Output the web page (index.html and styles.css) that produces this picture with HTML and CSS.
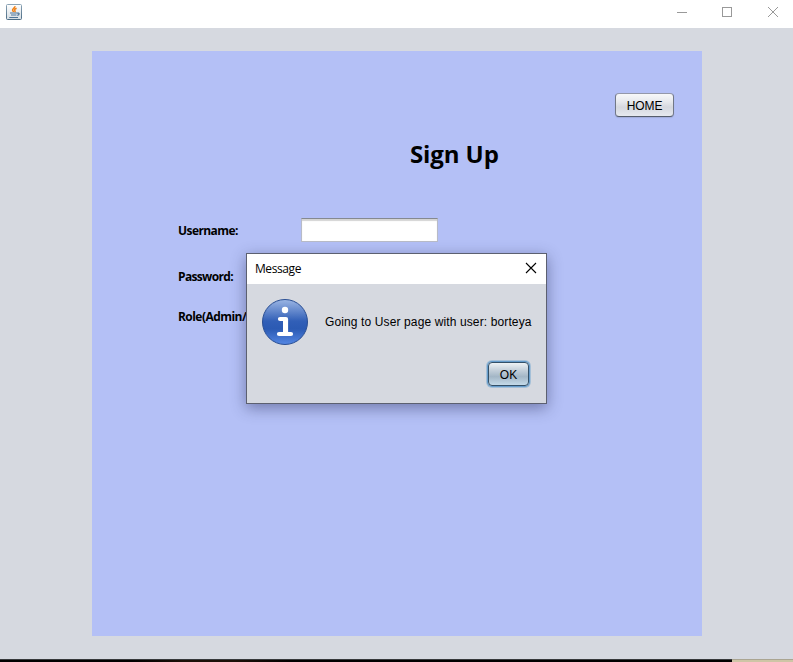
FILE: index.html
```
<!DOCTYPE html>
<html lang="en">
<head>
<meta charset="utf-8">
<title>Sign Up</title>
<link rel="stylesheet" href="styles.css">
</head>
<body>
<div class="window">
  <header class="titlebar">
    <svg class="java" width="16" height="16" viewBox="0 0 16 16" fill="none">
      <defs><linearGradient id="frame" x2="0" y2="1"><stop stop-color="#8aa3b5"/><stop offset="1" stop-color="#4c6c85"/></linearGradient>
      <linearGradient id="tile" x2="0" y2="1"><stop stop-color="#fff"/><stop offset="1" stop-color="#d5dde3"/></linearGradient></defs>
      <rect x=".5" y=".5" width="15" height="15" rx="1" fill="url(#tile)" stroke="url(#frame)"/>
      <path d="M9 2.200C9.200 4 6 4.700 6.600 6.200c.2.700.8 1.100.9 1.800M10.600 4.300C8.300 5.300 8.300 6 9 6.800c.4.600 0 1-.4 1.300" stroke="#f08218" stroke-width="1.500"/>
      <path d="M4 9h7M5 11h5.500M3.300 13.500h8.700M11 9.200c2.800-.8 2.800 1.600.3 2.100" stroke="#4f7497" stroke-width="1.200"/>
    </svg>
    <svg class="controls" width="102" height="12" viewBox="0 0 102 12" fill="none" stroke="#999">
      <path d="M0 6.500h10"/><rect x="45.500" y="1.500" width="9" height="9"/><path d="M91 1l10 10M101 1L91 11"/>
    </svg>
  </header>
  <main class="content">
    <section class="panel">
      <div class="top"><button class="btn home">HOME</button></div>
      <h1>Sign Up</h1>
      <form class="form">
        <label class="username">Username:</label><input type="text">
        <label class="password">Password:</label>
        <label class="role">Role(Admin/</label>
      </form>
    </section>
  </main>
  <footer class="edge"><div class="dark"></div><div class="light"></div></footer>
  <div class="dialog" role="dialog">
    <div class="dialog-title"><span>Message</span>
      <svg width="12" height="12" viewBox="0 0 12 12" stroke="#000" stroke-width="1.100"><path d="M1 1l10 10M11 1L1 11"/></svg>
    </div>
    <div class="message">
      <svg width="46" height="46" viewBox="0 0 46 46">
        <defs><linearGradient id="info" x2="0" y2="1"><stop stop-color="#9cb6e4"/><stop offset=".48" stop-color="#315fb7"/><stop offset=".65" stop-color="#2b5ab3"/><stop offset="1" stop-color="#5487e4"/></linearGradient></defs>
        <circle cx="23" cy="23" r="22.500" fill="url(#info)" stroke="#294e93"/>
        <circle cx="23" cy="11" r="3.200" fill="#fff"/>
        <path d="M18 20h6V35M17 35h12" fill="none" stroke="#fff" stroke-width="4.200" stroke-linecap="round" stroke-linejoin="round"/>
        <path d="M23.500 20v15" stroke="#fff" stroke-width="5"/>
      </svg>
      <span>Going to User page with user: borteya</span>
    </div>
    <div class="actions"><button class="btn ok">OK</button></div>
  </div>
</div>
</body>
</html>
```
FILE: styles.css
```
* { box-sizing: border-box; }
body { margin: 0; }
.window { position: relative; width: 793px; height: 662px; display: flex; flex-direction: column; overflow: hidden; background: #d6d9e0; color: #000; }
.titlebar { height: 28px; background: #fff; display: flex; justify-content: space-between; align-items: flex-start; padding: 4px 14px 0 6px; }
.controls { margin-top: 2px; }
.content { height: 631px; padding: 23px 91px 0 92px; }
.panel { height: 585px; background: #b4c0f6; padding-top: 42px; }
.top { display: flex; justify-content: flex-end; padding-right: 28px; }
.btn { font: 12px/16px "Liberation Sans", Arial, sans-serif; color: #000; padding: 2px 0 0; border-radius: 4px; border: 1px solid #717987; }
.home { width: 59px; height: 24px; border-color: #9498aa #727887 #555d6c; background: linear-gradient(#f7f8fa, #e7e9ed 35%, #d5d8df 60%, #e6e9ef); box-shadow: 0 1px 1px #909abf88; letter-spacing: -.1px; }
h1 { margin: 19px 0 0 318px; font: bold 24px/36px "Open Sans", "Noto Sans", sans-serif; letter-spacing: -.1px; }
.form { margin: 46px 0 0 86px; display: grid; grid-template-columns: 123px 137px; grid-template-rows: 24px 68px 12px; align-items: center; font: bold 12px/16px "Open Sans", "Noto Sans", sans-serif; }
.form label { white-space: nowrap; justify-self: start; grid-column: 1; padding-top: 2px; letter-spacing: -.58px; }
.form .password { letter-spacing: -.66px; }
.form .role { letter-spacing: -.55px; }
.form input { width: 137px; height: 24px; border: 1px solid #b8bbc7; border-top-color: #858990; background: #fff; box-shadow: inset 0 2px 1px #d4d4d4; }
.edge { height: 3px; display: flex; border-top: 1px solid #37393b; }
.dark { width: 732px; background: #000; background-image: linear-gradient(90deg, #000 18%, #1b1008 25%, #1b1008 32%, #000 40%); }
.light { flex: 1; background: #cec5a6; margin-top: -1px; border-top: 1px solid #aaa592; }
.dialog { position: absolute; left: 246px; top: 253px; width: 301px; height: 151px; border: 1px solid #5c6070; background: #d6d9e0; box-shadow: 0 4px 14px rgba(30,35,80,.45); }
.dialog-title { height: 30px; background: #fff; display: flex; align-items: center; justify-content: space-between; padding: 0 9px 2px 8px; font: 12px/16px "Open Sans", "Noto Sans", sans-serif; }
.dialog-title span { padding-top: 2px; letter-spacing: -.42px; }
.message { margin-top: 15px; padding-left: 15px; display: flex; align-items: center; gap: 17px; font: 12px/16px "Liberation Sans", Arial, sans-serif; letter-spacing: .12px; white-space: nowrap; }
.actions { display: flex; justify-content: flex-end; padding: 17px 17px 0 0; }
.ok { width: 41px; height: 24px; border-color: #335068; background: linear-gradient(#edf2f5, #c1cdd8 35%, #a3b6c6 62%, #c4dae9); box-shadow: 0 0 0 1px #669ccb, 0 0 0 2px #8db4d4aa; }
```
